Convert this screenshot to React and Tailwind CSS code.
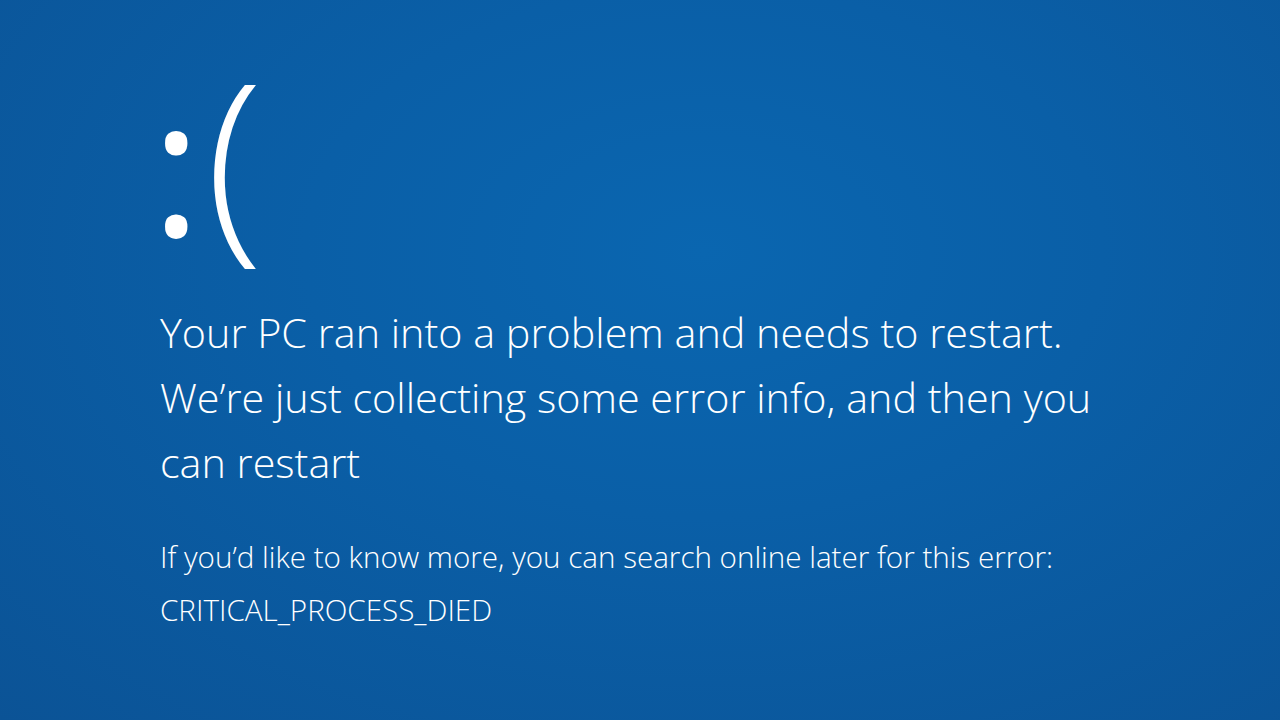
export default function App() {
  return (
    <div
      className="w-full h-[720px] overflow-hidden text-white bg-[radial-gradient(ellipse_at_55%_35%,#0a66b0_0%,#0a5fa7_40%,#0b5396_100%)]"
      style={{ fontFamily: '"Open Sans", "Noto Sans", sans-serif' }}
    >
      <div className="pl-[160px] pt-[49px] flex flex-col">
        <div className="h-[220px] flex items-baseline leading-none">
          <span className="text-[192px] font-normal -ml-[9px]">:</span>
          <span className="text-[211px] font-light ml-[4px]">(</span>
        </div>
        <div className="mt-[31px] text-[41.3px] leading-[65px] font-light w-[1000px]">
          <p>Your PC ran into a problem and needs to restart.</p>
          <p>We’re just collecting some error info, and then you</p>
          <p>can restart</p>
        </div>
        <div className="mt-[35px] text-[29.6px] leading-[53px] font-light">
          <p>If you’d like to know more, you can search online later for this error:</p>
          <p>CRITICAL_PROCESS_DIED</p>
        </div>
      </div>
    </div>
  )
}
